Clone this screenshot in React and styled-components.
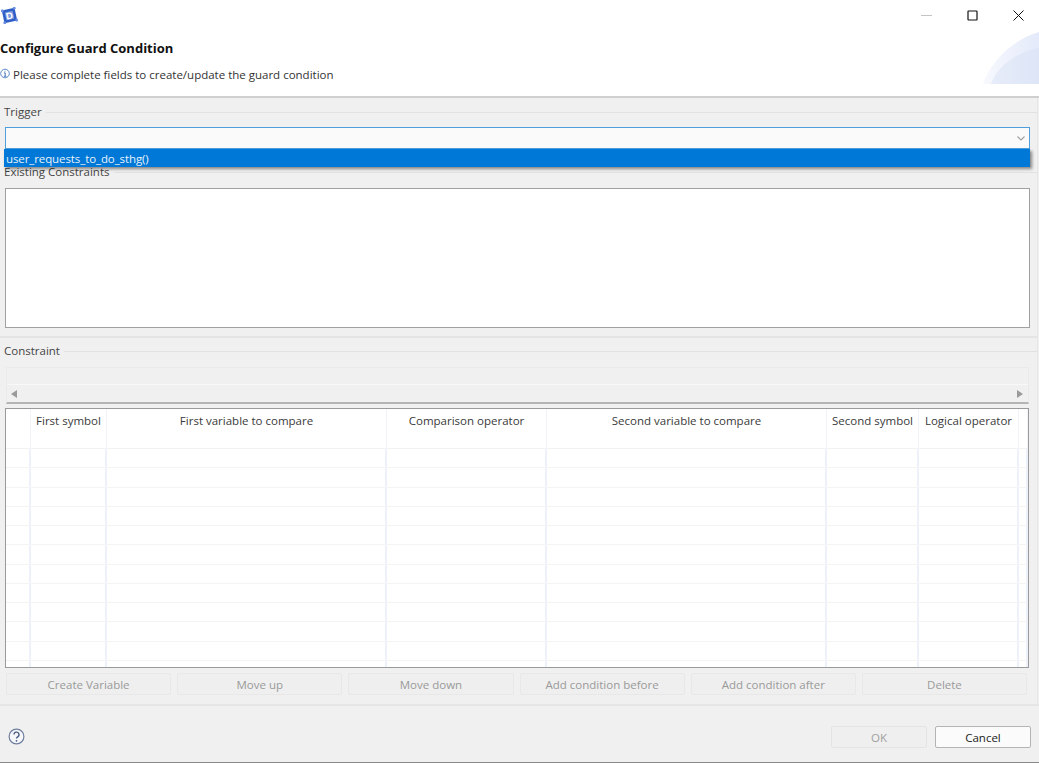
import React from 'react';
import styled, { createGlobalStyle } from 'styled-components';

const GlobalStyle = createGlobalStyle`
  html, body {
    margin: 0;
    padding: 0;
    background: #f0f0f0;
  }
  * {
    box-sizing: border-box;
  }
`;

const Dialog = styled.div`
  width: 1039px;
  height: 763px;
  display: flex;
  flex-direction: column;
  background: #f0f0f0;
  color: #222;
  font-family: "Open Sans", "Noto Sans", sans-serif;
  font-size: 11.5px;
  overflow: hidden;
  border-bottom: 1px solid #8a8a8a;
`;

const TitleBar = styled.div`
  height: 30px;
  flex: none;
  display: flex;
  align-items: center;
  justify-content: space-between;
  background: #fff;
  padding-left: 1px;
`;

const WindowButtons = styled.div`
  display: flex;
  align-items: center;
  margin-right: -2px;
`;

const WindowButton = styled.div`
  width: 46px;
  height: 30px;
  display: flex;
  align-items: center;
  justify-content: center;
`;

const Banner = styled.div`
  height: 68px;
  flex: none;
  position: relative;
  background: #fff;
  border-bottom: 2px solid #cfcfcf;
  overflow: hidden;
`;

const Title = styled.div`
  font-size: 13px;
  font-weight: 700;
  color: #111;
  line-height: 18px;
  margin-top: 9px;
`;

const Message = styled.div`
  display: flex;
  align-items: center;
  gap: 3px;
  margin-top: 10px;
  line-height: 16px;
  color: #333;
`;

const InfoGlyph = styled.svg`
  flex: none;
  margin-top: -4px;
`;

const Watermark = styled.svg`
  position: absolute;
  right: 0;
  top: 2px;
`;

const Body = styled.div`
  flex: 1;
  position: relative;
  display: flex;
  flex-direction: column;
`;

const Group = styled.div`
  height: ${p => p.$height}px;
  flex: none;
  margin-right: 1px;
  padding: 0 7px 0 5px;
  border-right: 1px solid #e6e6e6;
  border-bottom: ${p => (p.$last ? '2px solid #e4e4e4' : 'none')};
`;

const Legend = styled.div`
  height: ${p => p.$height}px;
  margin-bottom: ${p => p.$gap || 0}px;
  display: flex;
  align-items: center;
  gap: 4px;
  margin-left: -1px;
  margin-right: -7px;
  line-height: 16px;
  color: #444;
  &::after {
    content: '';
    flex: 1;
    height: 1px;
    background: #e2e2e2;
  }
`;

const ComboBox = styled.div`
  height: 22px;
  display: flex;
  align-items: center;
  justify-content: flex-end;
  padding-right: 4px;
  background: #fafafa;
  border: 1px solid #4f9fdc;
`;

const DropdownList = styled.div`
  position: absolute;
  left: 4px;
  top: 51px;
  width: 1026px;
  height: 18px;
  padding-left: 2px;
  display: flex;
  align-items: center;
  background: #0078d7;
  color: #e8f2fb;
  letter-spacing: -0.1px;
  box-shadow: 2px 2px 3px rgba(0, 0, 0, 0.45);
  z-index: 2;
`;

const TextArea = styled.div`
  height: 140px;
  background: #fff;
  border: 1px solid #a0a0a0;
`;

const Separator = styled.div`
  height: 2px;
  flex: none;
  background: #e6e6e6;
`;

const ScrollStrip = styled.div`
  height: 37px;
  margin-right: 1px;
  margin-left: 1px;
  display: flex;
  flex-direction: column;
  background: #f0f0f0;
  border: 1px solid #eaeaea;
  border-bottom: 2px solid #b4b4b4;
`;

const ScrollBlank = styled.div`
  flex: 1;
  border-bottom: 1px solid #f8f8f8;
`;

const ScrollTrack = styled.div`
  height: 17px;
  display: flex;
  align-items: center;
  justify-content: space-between;
  padding: 0 5px 0 4px;
`;

const Arrow = styled.div`
  width: 0;
  height: 0;
  border-top: 4px solid transparent;
  border-bottom: 4px solid transparent;
  ${p => (p.$right
    ? 'border-left: 6px solid #9a9a9a;'
    : 'border-right: 6px solid #9a9a9a;')}
`;

const Table = styled.div`
  height: 260px;
  margin-top: 4px;
  margin-right: 1px;
  background: #fff;
  border: 1px solid #9a9a9a;
  display: flex;
  flex-direction: column;
  overflow: hidden;
`;

const columns = '25px 76px 280px 160px 280px 92px 100px 1fr';

const HeaderRow = styled.div`
  height: 40px;
  flex: none;
  display: grid;
  grid-template-columns: ${columns};
  border-bottom: 1px solid #f2f2f2;
`;

const HeaderCell = styled.div`
  padding-top: 4px;
  line-height: 16px;
  text-align: center;
  white-space: nowrap;
  color: #3a3a3a;
  border-right: 1px solid #f0f4fa;
`;

const Row = styled.div`
  height: 19.25px;
  flex: none;
  display: grid;
  grid-template-columns: ${columns};
  border-bottom: 1px solid #f4f4f4;
`;

const Cell = styled.div`
  border-right: 2px solid #edf2fa;
`;

const ButtonRow = styled.div`
  display: flex;
  gap: 6px;
  margin-top: 5px;
  margin-left: 1px;
  margin-right: 3px;
`;

const ActionButton = styled.div`
  flex: 1;
  height: 22px;
  display: flex;
  align-items: center;
  justify-content: center;
  border: 1px solid #e8e8e8;
  border-radius: 2px;
  background: #efefef;
  color: #9a9a9a;
`;

const Footer = styled.div`
  flex: 1;
  display: flex;
  align-items: center;
  justify-content: space-between;
  padding: 0 8px 0 8px;
`;

const HelpGlyph = styled.svg`
  margin-top: 4px;
`;

const FooterButtons = styled.div`
  display: flex;
  gap: 8px;
  margin-top: 6px;
`;

const DialogButton = styled.div`
  width: 96px;
  height: 22px;
  display: flex;
  align-items: center;
  justify-content: center;
  border-radius: 2px;
  border: 1px solid ${p => (p.$disabled ? '#e4e4e4' : '#b4b4b4')};
  background: ${p => (p.$disabled ? '#efefef' : '#fbfbfb')};
  color: ${p => (p.$disabled ? '#a0a0a0' : '#222')};
`;

const AppIcon = () => (
  <svg width="17" height="17" viewBox="0 0 17 17">
    <g transform="rotate(-12 8.5 8.5)">
      <rect x="2" y="2" width="13" height="13" fill="#2f5fc6" />
      <rect x="4.5" y="4.5" width="8" height="8" fill="#7d9be0" />
      <rect x="1" y="1" width="2.5" height="2.5" fill="#6f93e6" />
      <rect x="13.5" y="1" width="2.5" height="2.5" fill="#6f93e6" />
      <rect x="1" y="13.5" width="2.5" height="2.5" fill="#6f93e6" />
      <rect x="13.5" y="13.5" width="2.5" height="2.5" fill="#6f93e6" />
      <text x="8.5" y="12" textAnchor="middle" fontSize="9.5" fontWeight="700" fontFamily="Liberation Sans, sans-serif" fill="#fff">D</text>
    </g>
  </svg>
);

const InfoIcon = () => (
  <InfoGlyph width="10" height="11" viewBox="0 0 10 11">
    <circle cx="5" cy="5.5" r="4.3" fill="#fff" stroke="#4a7fc4" strokeWidth="0.9" />
    <path d="M5 2.7v.9M3.9 4.9H5.2v3M3.8 8.3h2.6" fill="none" stroke="#2f67b0" strokeWidth="0.9" />
  </InfoGlyph>
);

const HelpIcon = () => (
  <HelpGlyph width="17" height="17" viewBox="0 0 17 17">
    <circle cx="8.5" cy="8.5" r="7.4" fill="#f6f7fa" stroke="#6f7f9e" strokeWidth="1.2" />
    <path d="M6 6.6a2.5 2.5 0 1 1 3.7 2.2c-.8.5-1.2.9-1.2 1.8" fill="none" stroke="#4d5f82" strokeWidth="1.4" />
    <circle cx="8.5" cy="12.8" r="0.9" fill="#4d5f82" />
  </HelpGlyph>
);

const constraintHeaders = [
  '',
  'First symbol',
  'First variable to compare',
  'Comparison operator',
  'Second variable to compare',
  'Second symbol',
  'Logical operator',
  '',
];

const actions = [
  'Create Variable',
  'Move up',
  'Move down',
  'Add condition before',
  'Add condition after',
  'Delete',
];

const App = () => (
  <Dialog>
    <GlobalStyle />
    <TitleBar>
      <AppIcon />
      <WindowButtons>
        <WindowButton>
          <svg width="11" height="11" viewBox="0 0 11 11">
            <path d="M0 5.5h11" stroke="#c4c4c4" />
          </svg>
        </WindowButton>
        <WindowButton>
          <svg width="11" height="11" viewBox="0 0 11 11">
            <rect x="1" y="1" width="9" height="9" rx="0.5" fill="none" stroke="#111" strokeWidth="1.2" />
          </svg>
        </WindowButton>
        <WindowButton>
          <svg width="11" height="11" viewBox="0 0 11 11">
            <path d="M.5.5l10 10M10.5.5l-10 10" stroke="#111" strokeWidth="1" />
          </svg>
        </WindowButton>
      </WindowButtons>
    </TitleBar>
    <Banner>
      <Title>Configure Guard Condition</Title>
      <Message>
        <InfoIcon />
        Please complete fields to create/update the guard condition
      </Message>
      <Watermark width="56" height="52" viewBox="0 0 56 52">
        <defs>
          <linearGradient id="wmark" x1="0" x2="1" y1="0" y2="0">
            <stop offset="0" stopColor="#f8f9fe" />
            <stop offset="1" stopColor="#e4eafa" />
          </linearGradient>
        </defs>
        <path d="M0 52C6 32 28 8 56 0V52z" fill="url(#wmark)" />
        <path d="M8 52C14 34 34 20 56 16V52z" fill="#d5dff5" opacity="0.45" />
      </Watermark>
    </Banner>
    <Body>
      <Group $height={66}>
        <Legend $height={28} $gap={1}>Trigger</Legend>
        <ComboBox>
          <svg width="8" height="5" viewBox="0 0 8 5">
            <path d="M.5.5L4 4 7.500.5" fill="none" stroke="#a0a0a0" strokeWidth="1.1" />
          </svg>
        </ComboBox>
      </Group>
      <DropdownList>user_requests_to_do_sthg()</DropdownList>
      <Group $height={174} $last>
        <Legend $height={16} $gap={8}>Existing Constraints</Legend>
        <TextArea />
      </Group>
      <Group $height={366}>
        <Legend $height={26} $gap={3}>Constraint</Legend>
        <ScrollStrip>
          <ScrollBlank />
          <ScrollTrack>
            <Arrow />
            <Arrow $right />
          </ScrollTrack>
        </ScrollStrip>
        <Table>
          <HeaderRow>
            {constraintHeaders.map((label, i) => (
              <HeaderCell key={i}>{label}</HeaderCell>
            ))}
          </HeaderRow>
          {Array.from({ length: 12 }).map((_, row) => (
            <Row key={row}>
              {constraintHeaders.map((_, i) => (
                <Cell key={i} />
              ))}
            </Row>
          ))}
        </Table>
        <ButtonRow>
          {actions.map(label => (
            <ActionButton key={label}>{label}</ActionButton>
          ))}
        </ButtonRow>
      </Group>
      <Separator />
      <Footer>
        <HelpIcon />
        <FooterButtons>
          <DialogButton $disabled>OK</DialogButton>
          <DialogButton>Cancel</DialogButton>
        </FooterButtons>
      </Footer>
    </Body>
  </Dialog>
);

export default App;
